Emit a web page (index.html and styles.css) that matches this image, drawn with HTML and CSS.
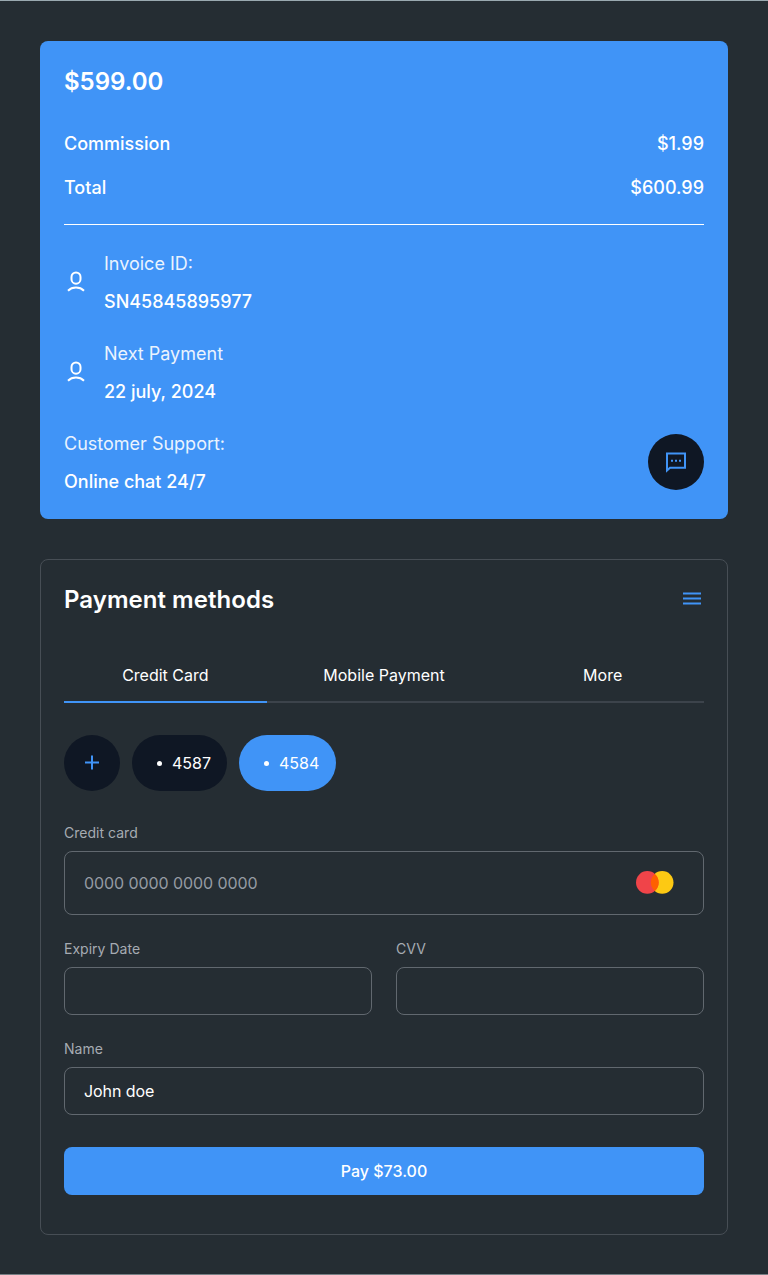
FILE: index.html
```html
<!DOCTYPE html>
<html lang="en">
<head>
<meta charset="utf-8">
<title>Payment</title>
<link rel="stylesheet" href="styles.css">
</head>
<body>
<main class="page">
  <section class="summary">
    <h1 class="amount">$599.00</h1>
    <div class="totals">
      <div class="row"><span>Commission</span><span>$1.99</span></div>
      <div class="row"><span>Total</span><span>$600.99</span></div>
    </div>
    <div class="details">
      <div class="detail">
        <svg class="icon person" viewBox="0 0.500 24 24"><rect x="7.5" y="3" width="9" height="11.2" rx="4.5"/><path d="M4 21.2c4.200-4.200 11.800-4.200 16 0"/></svg>
        <div class="pair"><span class="label">Invoice ID:</span><span class="value">SN45845895977</span></div>
      </div>
      <div class="detail">
        <svg class="icon person" viewBox="0 0.500 24 24"><rect x="7.5" y="3" width="9" height="11.2" rx="4.5"/><path d="M4 21.2c4.200-4.200 11.800-4.200 16 0"/></svg>
        <div class="pair"><span class="label">Next Payment</span><span class="value">22 july, 2024</span></div>
      </div>
      <div class="detail support">
        <div class="pair"><span class="label">Customer Support:</span><span class="value">Online chat 24/7</span></div>
        <button class="chat" aria-label="Open chat">
          <svg class="icon" viewBox="0 0 24 24"><path d="M3 3.500h18v14.200H6L3 20.500z"/><path class="dots" d="M7 9.700h2v2H7zM11 9.700h2v2h-2zM15 9.700h2v2h-2z"/></svg>
        </button>
      </div>
    </div>
  </section>

  <section class="payment">
    <header class="payment-head">
      <h2 class="heading">Payment methods</h2>
      <svg class="icon menu" viewBox="0 0.400 24 24"><path d="M3 7h18M3 12h18M3 17h18"/></svg>
    </header>
    <nav class="tabs">
      <a class="tab active">Credit Card</a>
      <a class="tab">Mobile Payment</a>
      <a class="tab">More</a>
    </nav>
    <div class="cards">
      <button class="add" aria-label="Add card"><svg class="icon" viewBox="0 0.400 24 24"><path d="M5 12h14M12 5v14"/></svg></button>
      <button class="chip"><i class="dot"></i>4587</button>
      <button class="chip selected"><i class="dot"></i>4584</button>
    </div>
    <form class="form">
      <div class="field">
        <span class="caption">Credit card</span>
        <div class="box tall"><span>0000 0000 0000 0000</span>
          <svg class="brand" viewBox="0 0.600 38 24"><circle cx="26.200" cy="12" r="11.300" fill="#fdc913"/><circle cx="11.300" cy="12" r="11.300" fill="#f04449"/><path d="M18.750 3.500a11.300 11.300 0 0 1 0 17a11.300 11.300 0 0 1 0-17z" fill="#ff5f00"/></svg>
        </div>
      </div>
      <div class="split">
        <div class="field"><span class="caption">Expiry Date</span><div class="box"></div></div>
        <div class="field"><span class="caption">CVV</span><div class="box"></div></div>
      </div>
      <div class="field"><span class="caption">Name</span><div class="box filled">John doe</div></div>
      <button class="pay" type="button">Pay $73.00</button>
    </form>
  </section>
</main>
</body>
</html>
```
FILE: styles.css
```css
* { box-sizing: border-box; }
body { margin: 0; background: #252d33; color: #fff; font-family: Inter, "Liberation Sans", sans-serif; }
button { border: 0; padding: 0; color: inherit; font: inherit; }
.page {
  height: 1275px;
  padding: 40px 40px 0;
  border-top: 1px solid #9aa9b0;
  border-bottom: 1px solid #777f84;
  display: flex;
  flex-direction: column;
  gap: 40px;
}
.icon { width: 24px; height: 24px; flex: none; fill: none; stroke: currentColor; stroke-width: 2; }

.summary { background: #4094f7; border-radius: 8px; padding: 24px 24px 22px; }
.amount { margin: 0; font-size: 24px; line-height: 34px; font-weight: 600; }
.totals {
  margin-top: 30px;
  padding-bottom: 21px;
  border-bottom: 1px solid #fff;
  display: flex;
  flex-direction: column;
  gap: 14px;
}
.row { display: flex; justify-content: space-between; font-size: 18px; line-height: 30px; font-weight: 500; }
.details { margin-top: 24px; display: flex; flex-direction: column; gap: 22px; }
.detail { display: flex; align-items: center; gap: 16px; }
.person { margin-bottom: 3px; }
.pair { display: flex; flex-direction: column; gap: 8px; font-size: 18px; line-height: 30px; }
.label { font-weight: 400; color: #eaf3fe; }
.value { font-weight: 500; }
.support { justify-content: space-between; }
.chat { width: 56px; height: 56px; margin-bottom: 2px; border-radius: 50%; background: #0f1724; color: #4094f7; display: grid; place-items: center; }
.chat .dots { fill: currentColor; stroke: none; }

.payment { height: 676px; border: 1px solid #474e55; border-radius: 8px; padding: 23px; }
.payment-head { display: flex; justify-content: space-between; align-items: center; }
.heading { margin: 0; font-size: 24px; line-height: 34px; font-weight: 600; letter-spacing: 0.04px; }
.menu { color: #4094f7; margin-bottom: 3px; }
.tabs {
  margin-top: 30px;
  display: grid;
  grid-template-columns: repeat(3, 1fr);
  column-gap: 16px;
  height: 56px;
  background: linear-gradient(#3c434b, #3c434b) bottom / 100% 2px no-repeat;
}
.tab { height: 56px; line-height: 56px; text-align: center; font-size: 16px; }
.tab.active { border-bottom: 2px solid #4094f7; }
.cards { margin-top: 32px; display: flex; gap: 12px; }
.add { width: 56px; height: 56px; border-radius: 28px; background: #0f1724; color: #4094f7; display: grid; place-items: center; }
.chip {
  height: 56px;
  padding: 0 16px 0 25px;
  border-radius: 28px;
  background: #0f1724;
  display: flex;
  align-items: center;
  gap: 10px;
  font-size: 16px;
}
.chip.selected { padding-right: 17px; background: #4094f7; }
.dot { width: 5px; height: 5px; margin-top: 1px; border-radius: 50%; background: currentColor; }

.form { margin-top: 32px; display: flex; flex-direction: column; gap: 24px; }
.field { display: flex; flex-direction: column; gap: 8px; }
.split { display: grid; grid-template-columns: 1fr 1fr; gap: 24px; }
.caption { font-size: 14px; line-height: 20px; color: #a6abb2; letter-spacing: 0.02px; }
.box {
  height: 48px;
  padding: 0 29px 0 19px;
  border: 1px solid #61686f;
  border-radius: 8px;
  display: flex;
  align-items: center;
  justify-content: space-between;
  font-size: 16px;
  letter-spacing: -0.08px;
  color: #959ba3;
}
.box.tall { height: 64px; }
.box.filled { color: #fff; }
.brand { width: 38px; height: 24px; margin-bottom: 1px; }
.pay { margin-top: 8px; height: 48px; border-radius: 8px; background: #4094f7; font-size: 16px; font-weight: 500; }
```
